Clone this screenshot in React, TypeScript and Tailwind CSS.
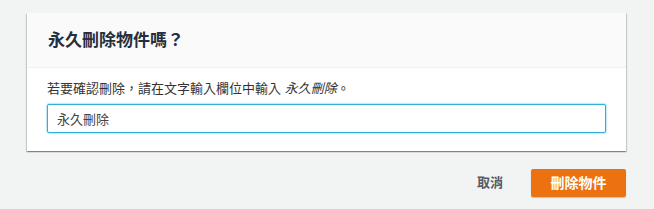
export default function App() {
  return (
    <div
      className="w-[654px] h-[209px] bg-[#f2f3f3] pt-[13px] pl-[27px] pr-[28px]"
      style={{ fontFamily: '"Liberation Sans", "Noto Sans CJK TC", sans-serif' }}
    >
      <div className="bg-white shadow-[0_1px_1px_0_rgba(0,28,36,0.3),1px_1px_1px_0_rgba(0,28,36,0.15),-1px_1px_1px_0_rgba(0,28,36,0.15)]">
        <div className="h-[55px] bg-[#fafafa] flex items-center px-[21px] border-b border-[#f0f0f0]">
          <h2 className="text-[17px] leading-none font-bold text-[#232f3e]">永久刪除物件嗎？</h2>
        </div>
        <div className="pt-[11px] pb-[18px] px-[20px]">
          <p className="text-[13px] leading-[20px] text-[#333]">
            若要確認刪除，請在文字輸入欄位中輸入 <i>永久刪除</i>。
          </p>
          <input
            defaultValue="永久刪除"
            className="mt-[5px] w-full h-[29px] px-[9px] text-[13px] text-[#444] border border-[#2fb0d4] rounded-[2px] shadow-[0_0_2px_0_#2fb0d4] outline-none bg-white"
          />
        </div>
      </div>
      <div className="flex justify-end items-center mt-[18px] gap-[28px]">
        <button className="text-[13px] font-bold text-[#545b64]">取消</button>
        <button className="w-[95px] h-[28px] bg-[#ec7211] text-white text-[14px] font-bold rounded-[2px] shadow-[0_1px_1px_rgba(0,0,0,0.2)]">
          刪除物件
        </button>
      </div>
    </div>
  )
}
